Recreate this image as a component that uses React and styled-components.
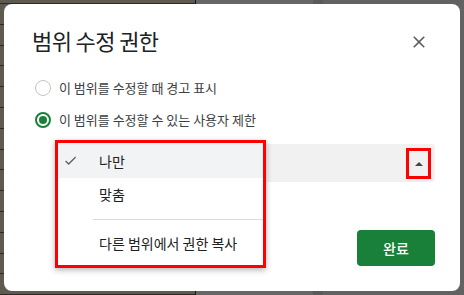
import React from 'react';
import styled, { createGlobalStyle } from 'styled-components';

const GlobalStyle = createGlobalStyle`
    html, body {
        margin: 0;
        padding: 0;
        height: 100%;
    }
    body {
        font-family: "Noto Sans CJK KR", "Noto Sans", sans-serif;
        background:
            repeating-linear-gradient(to bottom, transparent 0, transparent 3px, #2b2a27 3px, #2b2a27 4px, transparent 4px, transparent 20.8px) 0 0 / 195px 100% no-repeat,
            linear-gradient(to right, #5e5a4f 0, #5e5a4f 195px, #151515 195px, #151515 196px, #666666 196px, #666666 313px, #5a5a5a 313px, #5a5a5a 323px, #626262 323px);
    }
`;

const Page = styled.div`
    padding: 4px;
    box-sizing: border-box;
    width: 464px;
    height: 295px;
`;

const Dialog = styled.div`
    position: relative;
    width: 456px;
    box-sizing: border-box;
    background: #ffffff;
    border-radius: 8px;
    padding: 22px 25px 25px 28px;
`;

const Header = styled.div`
    display: flex;
    justify-content: space-between;
    align-items: center;
    height: 28px;
`;

const Title = styled.div`
    font-size: 22px;
    line-height: 28px;
    letter-spacing: -0.6px;
    color: #202124;
`;

const CloseButton = styled.div`
    display: flex;
    align-items: center;
    justify-content: center;
    width: 20px;
    height: 20px;
    margin-right: 6px;
    margin-top: 4px;
    color: #5f6368;
`;

const RadioGroup = styled.div`
    margin-top: 18px;
    display: flex;
    flex-direction: column;
`;

const RadioRow = styled.div`
    display: flex;
    align-items: center;
    height: 32px;
    gap: 8px;
    padding-left: 3px;
`;

const RadioCircle = styled.div`
    width: 16px;
    height: 16px;
    box-sizing: border-box;
    border-radius: 50%;
    border: ${p => (p.$checked ? '2px solid #188038' : '1.5px solid #c4c4c4')};
    display: flex;
    align-items: center;
    justify-content: center;

    &::after {
        content: '';
        display: ${p => (p.$checked ? 'block' : 'none')};
        width: 8px;
        height: 8px;
        border-radius: 50%;
        background: #188038;
    }
`;

const RadioLabel = styled.span`
    font-size: 13px;
    line-height: 20px;
    color: #3c4043;
`;

const SelectWrap = styled.div`
    position: relative;
    margin-top: 8px;
    margin-left: 24px;
`;

const SelectBox = styled.div`
    height: 38px;
    border-radius: 4px;
    background: #f1f1f1;
    display: flex;
    justify-content: flex-end;
    align-items: center;
    padding-right: 4px;
`;

const ArrowBox = styled.div`
    width: 25px;
    height: 31px;
    box-sizing: border-box;
    border: 3px solid #ff0000;
    display: flex;
    align-items: center;
    justify-content: center;
    margin-top: 1px;
`;

const Arrow = styled.div`
    width: 0;
    height: 0;
    border-left: 4px solid transparent;
    border-right: 4px solid transparent;
    border-bottom: 4px solid #444746;
`;

const Menu = styled.div`
    position: absolute;
    top: -4px;
    left: -1px;
    width: 211px;
    box-sizing: border-box;
    background: #ffffff;
    border: 3px solid #ff0000;
    box-shadow: 0 2px 6px rgba(0, 0, 0, 0.3);
    padding-bottom: 7px;
    z-index: 2;
`;

const MenuItem = styled.div`
    display: flex;
    align-items: center;
    height: ${p => p.$h}px;
    background: ${p => (p.$active ? '#f1f3f4' : 'transparent')};
    font-size: 14px;
    color: #202124;
`;

const CheckSlot = styled.div`
    width: 36px;
    padding-left: 5px;
    display: flex;
    align-items: center;
    color: #5f6368;
`;

const Divider = styled.div`
    margin: 9px 0 8px 35px;
    height: 1px;
    background: #dadce0;
`;

const Footer = styled.div`
    display: flex;
    justify-content: flex-end;
    margin-top: 48px;
`;

const DoneButton = styled.button`
    width: 78px;
    height: 36px;
    border: none;
    border-radius: 4px;
    background: #188038;
    color: #ffffff;
    font-family: "Noto Sans CJK KR", "Noto Sans", sans-serif;
    font-size: 14px;
    font-weight: 500;
    cursor: pointer;
`;

function CloseIcon() {
    return (
        <svg width="20" height="20" viewBox="0 0 24 24" fill="currentColor">
            <path d="M19 6.41L17.59 5 12 10.59 6.41 5 5 6.41 10.59 12 5 17.59 6.41 19 12 13.41 17.59 19 19 17.59 13.41 12z" />
        </svg>
    );
}

function CheckIcon() {
    return (
        <svg width="15" height="15" viewBox="0 0 24 24" fill="currentColor">
            <path d="M9 16.17L4.83 12l-1.42 1.41L9 19 21 7l-1.41-1.41z" />
        </svg>
    );
}

export default function App() {
    return (
        <Page>
            <GlobalStyle />
            <Dialog>
                <Header>
                    <Title>범위 수정 권한</Title>
                    <CloseButton>
                        <CloseIcon />
                    </CloseButton>
                </Header>
                <RadioGroup>
                    <RadioRow>
                        <RadioCircle />
                        <RadioLabel>이 범위를 수정할 때 경고 표시</RadioLabel>
                    </RadioRow>
                    <RadioRow>
                        <RadioCircle $checked />
                        <RadioLabel>이 범위를 수정할 수 있는 사용자 제한</RadioLabel>
                    </RadioRow>
                </RadioGroup>
                <SelectWrap>
                    <SelectBox>
                        <ArrowBox>
                            <Arrow />
                        </ArrowBox>
                    </SelectBox>
                    <Menu>
                        <MenuItem $active $h={35}>
                            <CheckSlot>
                                <CheckIcon />
                            </CheckSlot>
                            나만
                        </MenuItem>
                        <MenuItem $h={32}>
                            <CheckSlot />
                            맞춤
                        </MenuItem>
                        <Divider />
                        <MenuItem $h={30}>
                            <CheckSlot />
                            다른 범위에서 권한 복사
                        </MenuItem>
                    </Menu>
                </SelectWrap>
                <Footer>
                    <DoneButton>완료</DoneButton>
                </Footer>
            </Dialog>
        </Page>
    );
}
